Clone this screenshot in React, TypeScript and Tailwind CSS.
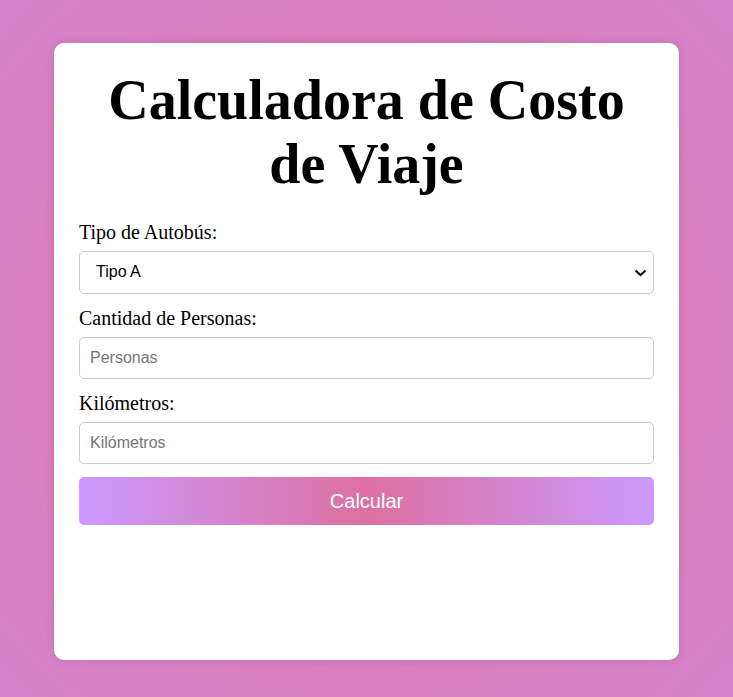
import React from "react";

export default function App() {
  return (
    <div className="min-h-[697px] w-full bg-[radial-gradient(circle_at_center,#dd74ac_0%,#d97fc2_70%,#d583cc_100%)] pt-[43px]">
      <div className="mx-auto h-[617px] w-[625px] rounded-[10px] bg-white px-[25px] pt-[25px] shadow-[0_0_10px_rgba(0,0,0,0.12)]">
        <h1 className="mb-[24px] text-center font-['Liberation_Serif',serif] text-[56px] font-bold leading-[1.15] text-black">
          Calculadora de Costo de Viaje
        </h1>

        <form onSubmit={(e) => e.preventDefault()} className="font-['Liberation_Serif',serif]">
          <label className="mb-[7px] block text-[20px] leading-[23px] text-black">Tipo de Autobús:</label>
          <div className="relative mb-[13px]">
            <select className="block h-[43px] w-full appearance-none rounded-[5px] border border-[#cccccc] bg-white px-[16px] font-['Liberation_Sans',sans-serif] text-[16px] text-black">
              <option>Tipo A</option>
              <option>Tipo B</option>
              <option>Tipo C</option>
            </select>
            {/* chevron */}
            <svg
              className="pointer-events-none absolute right-[7px] top-[18px]"
              width="13"
              height="8"
              viewBox="0 0 13 8"
              fill="none"
            >
              <path d="M1.5 1.5 L6.5 6 L11.5 1.5" stroke="#111" strokeWidth="2.2" />
            </svg>
          </div>

          <label className="mb-[7px] block text-[20px] leading-[23px] text-black">Cantidad de Personas:</label>
          <input
            type="number"
            placeholder="Personas"
            className="mb-[13px] block h-[42px] w-full rounded-[5px] border border-[#cccccc] px-[10px] font-['Liberation_Sans',sans-serif] text-[16px] text-black placeholder:text-[#757575]"
          />

          <label className="mb-[7px] block text-[20px] leading-[23px] text-black">Kilómetros:</label>
          <input
            type="number"
            placeholder="Kilómetros"
            className="mb-[13px] block h-[42px] w-full rounded-[5px] border border-[#cccccc] px-[10px] font-['Liberation_Sans',sans-serif] text-[16px] text-black placeholder:text-[#757575]"
          />

          <button
            type="submit"
            className="block h-[48px] w-full rounded-[5px] bg-[linear-gradient(to_right,#cc99ff,#dd70a0_50%,#cc99ff)] font-['Liberation_Sans',sans-serif] text-[20px] text-white"
          >
            Calcular
          </button>
        </form>
      </div>
    </div>
  );
}
